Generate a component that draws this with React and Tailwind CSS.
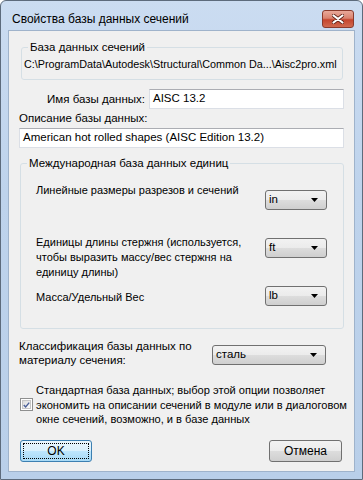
import React from "react";

const F = { fontFamily: '"Liberation Sans", Arial, sans-serif' };

function Arrow() {
  return (
    <svg width="8" height="5" viewBox="0 0 8 5" className="shrink-0">
      <path d="M0 0 H7 L3.5 4 Z" fill="#000" />
    </svg>
  );
}

function Combo({ value, w }) {
  return (
    <div
      className={`${w} h-[20px] shrink-0 rounded-[3px] border border-[#707070] bg-[linear-gradient(to_bottom,#f2f2f2_0%,#ebebeb_50%,#dddddd_50%,#cfcfcf_100%)] flex items-center justify-between pl-[3px] pr-[7px] text-[11.5px] text-black`}
    >
      <span>{value}</span>
      <Arrow />
    </div>
  );
}

function Input({ value, w }) {
  return (
    <div
      className={`${w} h-[20px] shrink-0 border border-[#dbdfe6] border-t-[#abadb3] bg-white flex items-center pl-[3px] text-[11.5px] text-black whitespace-nowrap`}
    >
      {value}
    </div>
  );
}

export default function App() {
  return (
    <div
      style={F}
      className="w-[363px] h-[480px] rounded-t-[6px] border border-[#5d6b7c] bg-[linear-gradient(to_bottom,#cbdcf1_0%,#bed3ec_40%,#b9cfe9_100%)] flex flex-col text-[11px] text-black overflow-hidden"
    >
      {/* Title bar */}
      <div className="h-[29px] flex items-start shrink-0">
        <div className="ml-[11px] mt-[10px] text-[12px] leading-[16px] text-black">
          Свойства базы данных сечений
        </div>
        <div className="ml-auto mr-[8px] mt-[9px] w-[32px] h-[18px] rounded-[3px] border border-[#8a3a2c] bg-[linear-gradient(to_bottom,#e9a99a_0%,#d9826f_45%,#c5452e_55%,#d06a50_100%)] flex items-center justify-center">
          <svg width="12" height="10" viewBox="0 0 12 10">
            <path d="M1.5 1.5 L10.5 8.5 M10.5 1.5 L1.5 8.5" stroke="#5a1e14" strokeWidth="3.6" strokeLinecap="round" />
            <path d="M1.5 1.5 L10.5 8.5 M10.5 1.5 L1.5 8.5" stroke="#ffffff" strokeWidth="2.2" strokeLinecap="round" />
          </svg>
        </div>
      </div>

      {/* Client area */}
      <div className="mx-[7px] h-[442px] border border-[#9fb3cb] bg-[#f0f0f0] flex flex-col shrink-0 whitespace-nowrap">
        {/* Group 1 */}
        <fieldset className="ml-[12px] mt-[9px] w-[322px] rounded-[3px] border border-[#d5dfe5] pl-[2px] pt-[3px] pb-[8px]">
          <legend className="ml-[4px] px-[2px] leading-[14px] text-[11.5px]">База данных сечений</legend>
          <div className="leading-[14px] text-[10.8px]">
            C:\ProgramData\Autodesk\Structural\Common Da...\Aisc2pro.xml
          </div>
        </fieldset>

        {/* Name row */}
        <div className="mt-[9px] flex items-center">
          <div className="w-[136px] text-right leading-[14px] text-[11.5px]">Имя базы данных:</div>
          <div className="ml-[4px]">
            <Input value="AISC 13.2" w="w-[195px]" />
          </div>
        </div>

        <div className="ml-[10px] mt-[2px] leading-[14px] text-[11.5px]">Описание базы данных:</div>
        <div className="ml-[10px] mt-[3px]">
          <Input value="American hot rolled shapes (AISC Edition 13.2)" w="w-[325px]" />
        </div>

        {/* Group 2 */}
        <fieldset className="ml-[11px] mt-[8px] w-[324px] rounded-[3px] border border-[#d5dfe5] pb-[22px]">
          <legend className="ml-[6px] px-[2px] leading-[14px] text-[11.5px]">Международная база данных единиц</legend>

          <div className="mt-[13px] flex items-start">
            <div className="ml-[15px] w-[229px] leading-[14px]">Линейные размеры разрезов и сечений</div>
            <div className="mt-[7px]">
              <Combo value="in" w="w-[62px]" />
            </div>
          </div>

          <div className="mt-[25px] flex items-start">
            <div className="ml-[15px] w-[229px] leading-[15px]">
              Единицы длины стержня (используется,
              <br />
              чтобы выразить массу/вес стержня на
              <br />
              единицу длины)
            </div>
            <div className="mt-[3px]">
              <Combo value="ft" w="w-[62px]" />
            </div>
          </div>

          <div className="mt-[6px] flex items-start">
            <div className="ml-[15px] mt-[4px] w-[229px] leading-[14px]">Масса/Удельный Вес</div>
            <div>
              <Combo value="lb" w="w-[62px]" />
            </div>
          </div>
        </fieldset>

        {/* Classification */}
        <div className="mt-[10px] flex items-start">
          <div className="ml-[10px] w-[193px] leading-[14px] text-[11.5px]">
            Классификация базы данных по
            <br />
            материалу сечения:
          </div>
          <div className="mt-[6px]">
            <Combo value="сталь" w="w-[114px]" />
          </div>
        </div>

        {/* Checkbox */}
        <div className="mt-[16px] flex items-center">
          <div className="ml-[11px] w-[13px] h-[13px] shrink-0 border border-[#8e8f8f] bg-white p-[1px]">
            <div className="w-full h-full border border-[#c6c6c6] bg-[linear-gradient(135deg,#dcdcdc,#fbfbfb)] flex items-center justify-center">
              <svg width="9" height="8" viewBox="0 0 9 8">
                <path d="M1 4 L3.4 6.6 L8 1" stroke="#4a5f97" strokeWidth="1.8" fill="none" />
              </svg>
            </div>
          </div>
          <div className="ml-[3px] leading-[14.5px] text-[11.1px]">
            Стандартная база данных; выбор этой опции позволяет
            <br />
            экономить на описании сечений в модуле или в диалоговом
            <br />
            окне сечений, возможно, и в базе данных
          </div>
        </div>

        {/* Buttons */}
        <div className="mt-[13px] flex items-center text-[12px]">
          <div className="ml-[11px] w-[72px] h-[22px] rounded-[3px] border border-[#3c7fb1] bg-[linear-gradient(to_bottom,#eaf6fd_0%,#d9f0fc_50%,#bee6fd_50%,#a7d9f5_100%)] p-[2px]">
            <div className="w-full h-full border border-dotted border-[#000] flex items-center justify-center leading-[14px]">
              OK
            </div>
          </div>
          <div className="ml-auto mr-[12px] w-[73px] h-[22px] rounded-[3px] border border-[#707070] bg-[linear-gradient(to_bottom,#f2f2f2_0%,#ebebeb_50%,#dddddd_50%,#cfcfcf_100%)] flex items-center justify-center leading-[14px]">
            Отмена
          </div>
        </div>
      </div>
    </div>
  );
}
